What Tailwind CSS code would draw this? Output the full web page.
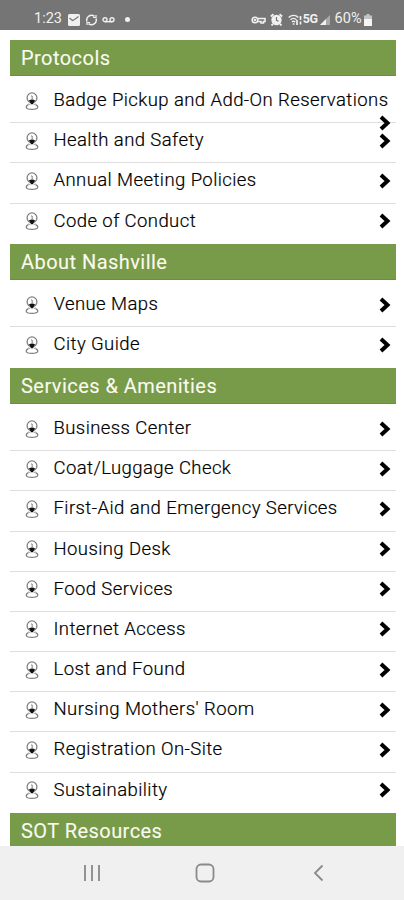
<!DOCTYPE html>
<html lang="en">
<head>
    <meta charset="UTF-8">
    <meta name="viewport" content="width=device-width, initial-scale=1.0">
    <title>Event Info</title>
    <script src="https://cdn.jsdelivr.net/npm/@tailwindcss/browser@4"></script>
</head>
<body class="bg-white font-['Roboto',sans-serif] text-black">

    <!-- Shared icons -->
    <svg class="hidden">
        <symbol id="icon-pin" viewBox="0 0 14 18">
            <circle cx="7" cy="5.8" r="4.9" fill="none" stroke="#808080" stroke-width="1.3"/>
            <path d="M6 4h1.2v3.4M5.6 7.4h3" fill="none" stroke="#777" stroke-width=".9"/>
            <path d="M4 8h6L8 12.2H6z" fill="#111"/>
            <path d="M3.8 11.6l1.2 1.2M10.2 11.6L9 12.8" stroke="#777" stroke-width="1"/>
            <path d="M3.6 12.6C2 13 1.2 14 1.3 15.2c.1 1.5 2.3 2.1 5.7 2.1s5.6-.6 5.7-2.1c.1-1.2-.7-2.2-2.3-2.6" fill="none" stroke="#808080" stroke-width="1.3"/>
        </symbol>
        <symbol id="icon-chevron" viewBox="0 0 12 16">
            <path d="M2 2l6.5 6L2 14" fill="none" stroke="#000" stroke-width="4"/>
        </symbol>
    </svg>

    <div class="h-[900px] w-[404px] flex flex-col overflow-hidden">

        <!-- Status bar -->
        <div class="h-[30px] shrink-0 bg-[#757575] flex items-center justify-between pl-[34px] pr-[32.5px] pt-[9px] text-[#f0f0f0]">
            <div class="flex items-center">
                <span class="w-[34px] text-[14.5px] leading-none">1:23</span>
                <svg class="size-3" viewBox="0 0 12 12">
                    <rect width="12" height="12" rx="1.5" fill="#f0f0f0"/>
                    <path d="M1.5 4l3 2.5 2-1 4-3" fill="none" stroke="#757575" stroke-width="1.2"/>
                </svg>
                <svg class="ml-[5px] h-3 w-[13px]" viewBox="0 0 13 12" fill="none" stroke="#f0f0f0" stroke-width="1.5">
                    <path d="M2 7.5A4.7 4.7 0 0 1 9.5 2.4M11 4.5A4.7 4.7 0 0 1 3.5 9.6"/>
                    <path d="M8 3.5h3V1M5 8.5H2V11" stroke-width="1.2"/>
                </svg>
                <svg class="ml-[4px] h-[6px] w-[13px]" viewBox="0 0 13 6" fill="none" stroke="#f0f0f0" stroke-width="1.4">
                    <circle cx="3" cy="2.7" r="2"/>
                    <circle cx="10" cy="2.7" r="2"/>
                    <path d="M3 4.7h7"/>
                </svg>
                <span class="ml-[10px] size-[5px] rounded-full bg-[#f0f0f0]"></span>
            </div>
            <div class="flex items-center">
                <svg class="h-2 w-[15px]" viewBox="0 0 15 8" fill="none" stroke="#f0f0f0" stroke-width="1.6">
                    <circle cx="4" cy="4" r="2.8"/>
                    <circle cx="4" cy="4" r=".5"/>
                    <path d="M7 2.5h7v3h-1.5V7H10V5.5H7"/>
                </svg>
                <svg class="ml-[4px] size-[13px]" viewBox="0 0 13 13">
                    <circle cx="6.5" cy="7" r="5.2" fill="#f0f0f0"/>
                    <path d="M.8 3.5l2.7-2.3M12.2 3.5L9.5 1.2M3 11l-1.5 1.5M10 11l1.5 1.5" stroke="#f0f0f0" stroke-width="1.8"/>
                    <path d="M6.5 4v3.3l2 1" fill="none" stroke="#757575" stroke-width="1.2"/>
                </svg>
                <svg class="ml-[5px] h-3 w-[15px]" viewBox="0 0 15 12" fill="none" stroke="#f0f0f0" stroke-width="1.4">
                    <path d="M.7 3.5c3-2.8 7-2.8 9.6 0M2.5 5.8c1.8-1.7 4.2-1.7 6 0M4 8c1-1 2.2-1 3.2 0"/>
                    <path d="M5.6 9.2v1.6M9 6v5M12.5 2v4M12.5 7.5v3" stroke-width="1.7"/>
                </svg>
                <span class="text-[12.5px] font-bold leading-none tracking-[-0.4px]">5G</span>
                <svg class="ml-[2px] h-[11px] w-[10px]" viewBox="0 0 10 11">
                    <path d="M0 11L10 1v10z" fill="#aaa"/>
                    <path d="M0 11L6 5v6z" fill="#f0f0f0"/>
                </svg>
                <span class="ml-[5px] text-[14.5px] leading-none">60%</span>
                <svg class="ml-[2px] h-3 w-2" viewBox="0 0 8 12">
                    <path d="M2.5 0h3v1.5H8V12H0V1.5h2.5z" fill="#c4c4c4"/>
                    <path d="M0 5h8v7H0z" fill="#f5f5f5"/>
                </svg>
            </div>
        </div>

        <!-- Section list, filled in below -->
        <main id="sections" class="min-h-0 flex-1 overflow-hidden pl-[9.5px] pr-[8px] pt-[9.5px]"></main>

        <!-- Navigation bar -->
        <div class="h-[54px] shrink-0 bg-[#f0f0f0] flex items-center justify-between pl-[83px] pr-[80px]">
            <svg class="h-[18px] w-[18px]" viewBox="0 0 18 18" stroke="#929292" stroke-width="2">
                <path d="M2 1v16M9 1v16M16 1v16"/>
            </svg>
            <svg class="mr-[5px] size-5" viewBox="0 0 20 20">
                <rect x="1.5" y="1.5" width="17" height="17" rx="4.5" fill="none" stroke="#8a8a8a" stroke-width="1.8"/>
            </svg>
            <svg class="h-[18px] w-[11px]" viewBox="0 0 11 18">
                <path d="M9.5 1.5L2 9l7.5 7.5" fill="none" stroke="#8a8a8a" stroke-width="1.8"/>
            </svg>
        </div>
    </div>

    <script>
        const sections = [
            { title: 'Protocols', items: ['Badge Pickup and Add-On Reservations', 'Health and Safety', 'Annual Meeting Policies', 'Code of Conduct'] },
            { title: 'About Nashville', items: ['Venue Maps', 'City Guide'] },
            { title: 'Services &amp; Amenities', items: ['Business Center', 'Coat/Luggage Check', 'First-Aid and Emergency Services', 'Housing Desk', 'Food Services', 'Internet Access', 'Lost and Found', "Nursing Mothers' Room", 'Registration On-Site', 'Sustainability'] },
            { title: 'SOT Resources', items: [] }
        ];

        // Long labels push their arrow down onto the divider
        const row = (label) => `
            <li class="h-[40.2px] flex items-start border-b border-[#dedede] last:border-b-0 pl-[15px] pr-[5px]">
                <svg class="mt-[8.6px] h-[18px] w-[14px] shrink-0"><use href="#icon-pin"/></svg>
                <span class="ml-[15px] mt-[5px] min-w-0 flex-1 whitespace-nowrap text-[18.5px] font-light leading-6 tracking-[0.42px] [-webkit-text-stroke:0.2px_#000]">${label}</span>
                <svg class="${label.length > 34 ? 'relative top-[32px]' : 'relative top-[9.6px]'} h-4 w-3 shrink-0"><use href="#icon-chevron"/></svg>
            </li>`;

        document.getElementById('sections').innerHTML = sections.map((s) => `
            <section>
                <h2 class="h-[36.75px] bg-[#789b4a] border-b border-[#6c9036] pl-[11.5px] text-[20px] leading-[36px] tracking-[0.45px] text-[#fafaf0] [-webkit-text-stroke:0.1px_#fafaf0]">${s.title}</h2>
                <ul class="pt-[6.7px]">${s.items.map(row).join('')}</ul>
            </section>`).join('');
    </script>
</body>
</html>
